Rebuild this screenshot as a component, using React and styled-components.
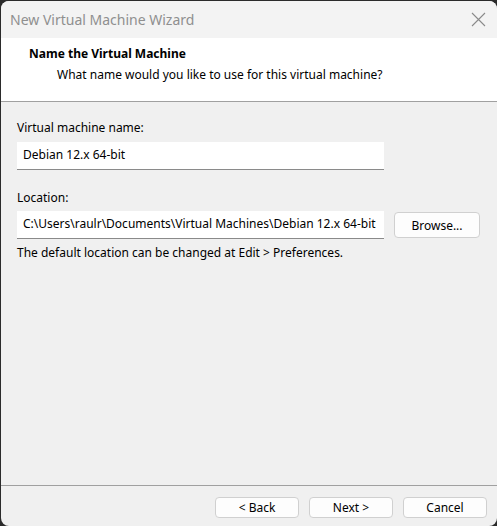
import React from "react";
import styled, { createGlobalStyle } from "styled-components";

const Global = createGlobalStyle`
  html, body { margin: 0; padding: 0; background: #2b2b2b; }
  body { font-family: "Noto Sans", "DejaVu Sans", sans-serif; }
  * { box-sizing: border-box; }
`;

const Window = styled.div`
  width: 496px;
  height: 525px;
  margin: 1px 0 0 1px;
  border-radius: 8px;
  overflow: hidden;
  background: #f0f0f0;
  display: flex;
  flex-direction: column;
  font-size: 12px;
  color: #000;
`;

const TitleBar = styled.div`
  height: 37px;
  flex: none;
  background: #f3f3f3;
  display: flex;
  align-items: center;
  justify-content: space-between;
  padding: 0 11px 1px 9px;
`;

const Title = styled.span`
  font-size: 14px;
  color: #8f8f8f;
`;

const CloseBtn = styled.div`
  width: 16px;
  height: 16px;
  display: flex;
  align-items: center;
  justify-content: center;
`;

const Header = styled.div`
  height: 64px;
  flex: none;
  background: #fff;
  border-bottom: 1px solid #a0a0a0;
  padding: 7px 0 0 28px;
  display: flex;
  flex-direction: column;
  gap: 4px;
`;

const HeaderTitle = styled.div`
  font-weight: 700;
  font-size: 12px;
`;

const HeaderSub = styled.div`
  padding-left: 28px;
`;

const Body = styled.div`
  flex: 1;
  padding: 17px 17px 0 16px;
  display: flex;
  flex-direction: column;
`;

const Label = styled.div`
  margin-top: ${(p) => p.$mt || 0}px;
  height: 18px;
  line-height: 18px;
`;

const Row = styled.div`
  display: flex;
  align-items: flex-start;
  gap: 10px;
  margin-top: ${(p) => p.$mt || 0}px;
`;

const Field = styled.div`
  width: 367px;
  height: 28px;
  background: #fff;
  border-bottom: 1px solid #8a8a8a;
  padding: 0 0 2px 6px;
  display: flex;
  align-items: center;
  white-space: nowrap;
  overflow: hidden;
`;

const Button = styled.button`
  font-family: inherit;
  font-size: 12px;
  color: #000;
  background: #fdfdfd;
  border: 1px solid #d0d0d0;
  border-radius: 4px;
  width: ${(p) => p.$w || 84}px;
  height: ${(p) => p.$h || 21}px;
  padding: 0;
  margin-top: ${(p) => p.$mt || 0}px;
  display: flex;
  align-items: center;
  justify-content: center;
`;

const Note = styled.div`
  margin-top: 5px;
`;

const Footer = styled.div`
  height: 41px;
  flex: none;
  border-top: 1px solid #a0a0a0;
  display: flex;
  justify-content: flex-end;
  align-items: flex-start;
  padding: 11px 10px 0 0;
  gap: 10px;
`;

export default function App() {
  return (
    <>
      <Global />
      <Window>
        <TitleBar>
          <Title>New Virtual Machine Wizard</Title>
          <CloseBtn>
            <svg width="15" height="15" viewBox="0 0 15 15">
              <path d="M1 1 L14 14 M14 1 L1 14" stroke="#8a8a8a" strokeWidth="1.1" />
            </svg>
          </CloseBtn>
        </TitleBar>
        <Header>
          <HeaderTitle>Name the Virtual Machine</HeaderTitle>
          <HeaderSub>What name would you like to use for this virtual machine?</HeaderSub>
        </Header>
        <Body>
          <Label>Virtual machine name:</Label>
          <Row $mt={5}>
            <Field>Debian 12.x 64-bit</Field>
          </Row>
          <Label $mt={19}>Location:</Label>
          <Row $mt={4}>
            <Field>C:\Users\raulr\Documents\Virtual Machines\Debian 12.x 64-bit</Field>
            <Button $w={86} $h={26} $mt={1}>Browse...</Button>
          </Row>
          <Note>The default location can be changed at Edit &gt; Preferences.</Note>
        </Body>
        <Footer>
          <Button>&lt; Back</Button>
          <Button>Next &gt;</Button>
          <Button>Cancel</Button>
        </Footer>
      </Window>
    </>
  );
}
